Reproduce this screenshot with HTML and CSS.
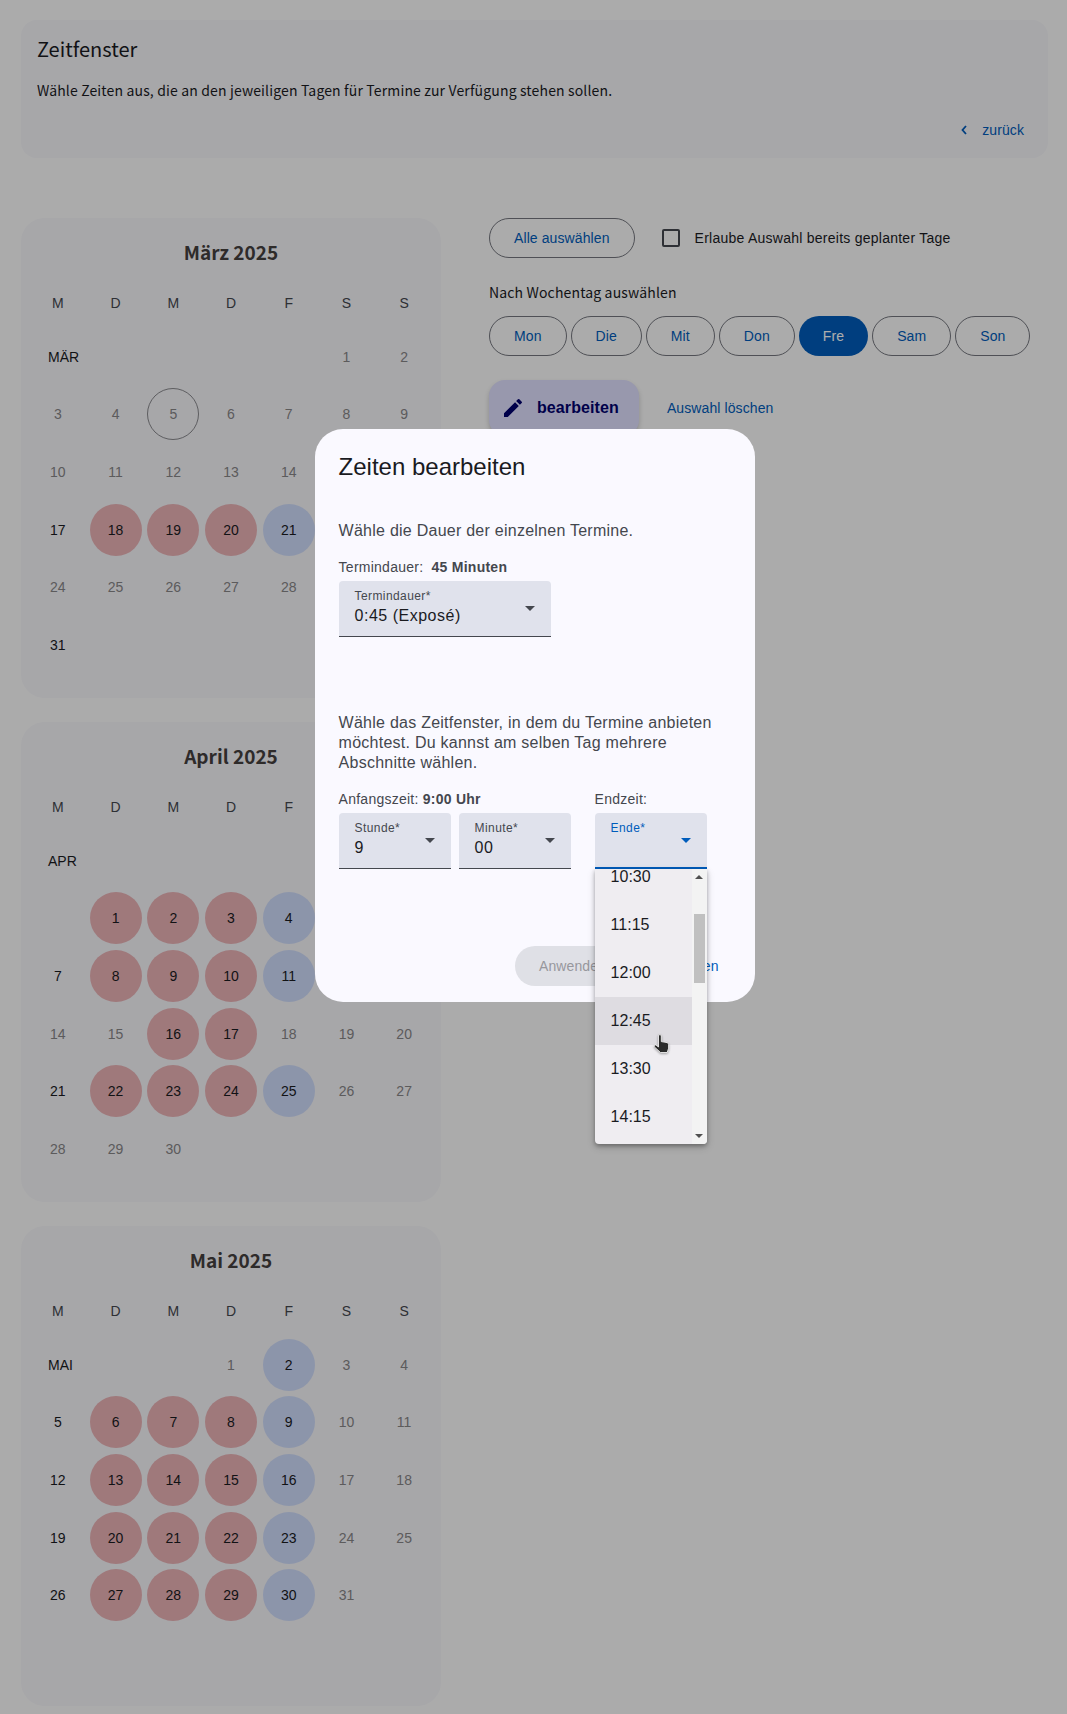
FILE: index.html
```html
<!DOCTYPE html>
<html lang="de">
<head>
    <meta charset="UTF-8">
    <meta name="viewport" content="width=device-width, initial-scale=1.0">
    <title>Zeitfenster</title>
    <link rel="stylesheet" href="styles.css">
</head>
<body>
    <!-- Page behind the dialog -->
    <header class="head-card">
        <h1>Zeitfenster</h1>
        <p>Wähle Zeiten aus, die an den jeweiligen Tagen für Termine zur Verfügung stehen sollen.</p>
        <div class="head-actions">
            <a class="back-link">
                <svg class="back-icon" viewBox="0 0 8 12" width="8" height="12"><path d="M6 2 2.5 6 6 10" fill="none" stroke="#005cbb" stroke-width="1.8"/></svg>
                zurück
            </a>
        </div>
    </header>

    <main class="layout">
        <div class="calendars">
            <!-- March -->
            <section class="month">
                <h2>März 2025</h2>
                <div class="weekdays"><span>M</span><span>D</span><span>M</span><span>D</span><span>F</span><span>S</span><span>S</span></div>
                <div class="days">
                    <span class="month-label span-5">MÄR</span>
                    <span class="day off">1</span><span class="day off">2</span>
                    <span class="day off">3</span><span class="day off">4</span><span class="day off"><b class="today">5</b></span><span class="day off">6</span><span class="day off">7</span><span class="day off">8</span><span class="day off">9</span>
                    <span class="day off">10</span><span class="day off">11</span><span class="day off">12</span><span class="day off">13</span><span class="day off">14</span><span class="day off">15</span><span class="day off">16</span>
                    <span class="day">17</span><span class="day"><b class="red">18</b></span><span class="day"><b class="red">19</b></span><span class="day"><b class="red">20</b></span><span class="day"><b class="blue">21</b></span><span class="day off">22</span><span class="day off">23</span>
                    <span class="day off">24</span><span class="day off">25</span><span class="day off">26</span><span class="day off">27</span><span class="day off">28</span><span class="day off">29</span><span class="day off">30</span>
                    <span class="day">31</span>
                </div>
            </section>

            <!-- April -->
            <section class="month">
                <h2>April 2025</h2>
                <div class="weekdays"><span>M</span><span>D</span><span>M</span><span>D</span><span>F</span><span>S</span><span>S</span></div>
                <div class="days">
                    <span class="month-label span-7">APR</span>
                    <span class="day"></span><span class="day"><b class="red">1</b></span><span class="day"><b class="red">2</b></span><span class="day"><b class="red">3</b></span><span class="day"><b class="blue">4</b></span><span class="day off">5</span><span class="day off">6</span>
                    <span class="day">7</span><span class="day"><b class="red">8</b></span><span class="day"><b class="red">9</b></span><span class="day"><b class="red">10</b></span><span class="day"><b class="blue">11</b></span><span class="day off">12</span><span class="day off">13</span>
                    <span class="day off">14</span><span class="day off">15</span><span class="day"><b class="red">16</b></span><span class="day"><b class="red">17</b></span><span class="day off">18</span><span class="day off">19</span><span class="day off">20</span>
                    <span class="day">21</span><span class="day"><b class="red">22</b></span><span class="day"><b class="red">23</b></span><span class="day"><b class="red">24</b></span><span class="day"><b class="blue">25</b></span><span class="day off">26</span><span class="day off">27</span>
                    <span class="day off">28</span><span class="day off">29</span><span class="day off">30</span>
                </div>
            </section>

            <!-- May -->
            <section class="month">
                <h2>Mai 2025</h2>
                <div class="weekdays"><span>M</span><span>D</span><span>M</span><span>D</span><span>F</span><span>S</span><span>S</span></div>
                <div class="days">
                    <span class="month-label span-3">MAI</span>
                    <span class="day off">1</span><span class="day"><b class="blue">2</b></span><span class="day off">3</span><span class="day off">4</span>
                    <span class="day">5</span><span class="day"><b class="red">6</b></span><span class="day"><b class="red">7</b></span><span class="day"><b class="red">8</b></span><span class="day"><b class="blue">9</b></span><span class="day off">10</span><span class="day off">11</span>
                    <span class="day">12</span><span class="day"><b class="red">13</b></span><span class="day"><b class="red">14</b></span><span class="day"><b class="red">15</b></span><span class="day"><b class="blue">16</b></span><span class="day off">17</span><span class="day off">18</span>
                    <span class="day">19</span><span class="day"><b class="red">20</b></span><span class="day"><b class="red">21</b></span><span class="day"><b class="red">22</b></span><span class="day"><b class="blue">23</b></span><span class="day off">24</span><span class="day off">25</span>
                    <span class="day">26</span><span class="day"><b class="red">27</b></span><span class="day"><b class="red">28</b></span><span class="day"><b class="red">29</b></span><span class="day"><b class="blue">30</b></span><span class="day off">31</span>
                </div>
            </section>
        </div>

        <div class="side">
            <div class="select-row">
                <button class="pill">Alle auswählen</button>
                <label class="check"><span class="check-box"></span>Erlaube Auswahl bereits geplanter Tage</label>
            </div>
            <div class="side-label">Nach Wochentag auswählen</div>
            <div class="weekday-pills">
                <button class="pill">Mon</button>
                <button class="pill">Die</button>
                <button class="pill">Mit</button>
                <button class="pill">Don</button>
                <button class="pill active">Fre</button>
                <button class="pill">Sam</button>
                <button class="pill">Son</button>
            </div>
            <div class="edit-row">
                <button class="edit-fab">
                    <svg viewBox="0 0 24 24" width="24" height="24"><path fill="#00006e" d="M3 17.25V21h3.75L17.81 9.94l-3.75-3.75L3 17.25zM20.71 7.04a1 1 0 0 0 0-1.41l-2.34-2.34a1 1 0 0 0-1.41 0l-1.83 1.83 3.75 3.75 1.83-1.83z"/></svg>
                    bearbeiten
                </button>
                <a class="link">Auswahl löschen</a>
            </div>
        </div>
    </main>

    <div class="backdrop"></div>

    <!-- Dialog -->
    <div class="dialog">
        <h2 class="dialog-title">Zeiten bearbeiten</h2>
        <p class="dialog-text first">Wähle die Dauer der einzelnen Termine.</p>
        <div class="field-label">Termindauer:&nbsp; <strong>45 Minuten</strong></div>
        <div class="select wide">
            <span class="select-label">Termindauer*</span>
            <span class="select-value">0:45 (Exposé)</span>
            <i class="arrow"></i>
        </div>

        <p class="dialog-text second">Wähle das Zeitfenster, in dem du Termine anbieten möchtest. Du kannst am selben Tag mehrere Abschnitte wählen.</p>
        <div class="time-row">
            <div class="time-start">
                <div class="field-label">Anfangszeit: <strong>9:00 Uhr</strong></div>
                <div class="select-pair">
                    <div class="select">
                        <span class="select-label">Stunde*</span>
                        <span class="select-value">9</span>
                        <i class="arrow"></i>
                    </div>
                    <div class="select">
                        <span class="select-label">Minute*</span>
                        <span class="select-value">00</span>
                        <i class="arrow"></i>
                    </div>
                </div>
            </div>
            <div class="time-end">
                <div class="field-label">Endzeit:</div>
                <div class="select focused">
                    <span class="select-label">Ende*</span>
                    <span class="select-value">&nbsp;</span>
                    <i class="arrow"></i>
                    <div class="panel">
                        <ul class="options">
                            <li>10:30</li>
                            <li>11:15</li>
                            <li>12:00</li>
                            <li class="hover">12:45</li>
                            <li>13:30</li>
                            <li>14:15</li>
                        </ul>
                        <div class="scrollbar">
                            <i class="scroll-up"></i>
                            <div class="scroll-thumb"></div>
                            <i class="scroll-down"></i>
                        </div>
                    </div>
                </div>
            </div>
        </div>
        <div class="dialog-actions">
            <button class="apply">Anwenden</button>
            <a class="link cancel">Abbrechen</a>
        </div>
    </div>

    <!-- Mouse pointer from the screenshot -->
    <svg class="hand" viewBox="0 0 18 20" width="18" height="20"><path d="M5.5 2a1.4 1.4 0 0 1 2.8 0v5.6l5.7 1a2 2 0 0 1 1.6 2v3.6L14.2 18.500H7.500L1.500 13a1.200 1.200 0 0 1 1.700-1.700L5.500 13z" fill="#2b2b2b" stroke="#fff" stroke-width=".8"/></svg>
</body>
</html>
```

FILE: styles.css
```css
/* Base */
html, body {
    margin: 0;
    padding: 0;
}

body {
    position: relative;
    width: 1067px;
    height: 1714px;
    overflow: hidden;
    background: #fcfcfc;
    color: #1a1b1f;
    font-family: "Liberation Sans", Arial, sans-serif;
    font-size: 14px;
}

h1, h2, p, ul {
    margin: 0;
    padding: 0;
}

button {
    font-family: inherit;
    font-size: 14px;
    letter-spacing: .1px;
    cursor: pointer;
}

.link, .back-link {
    color: #005cbb;
    letter-spacing: .1px;
}

/* Top card */
.head-card {
    margin: 20px 19px 0 21px;
    height: 138px;
    box-sizing: border-box;
    padding: 15px 24px 0 16px;
    background: #f6f6fa;
    border-radius: 16px;
    font-family: "Noto Sans CJK SC", sans-serif;
}

.head-card h1 {
    font-size: 20px;
    font-weight: 400;
    line-height: 28px;
}

.head-card p {
    margin-top: 17px;
    font-size: 14px;
    letter-spacing: .15px;
    line-height: 20px;
}

.head-actions {
    margin-top: 20px;
    display: flex;
    justify-content: flex-end;
    line-height: 20px;
    font-family: "Liberation Sans", Arial, sans-serif;
}

.back-link {
    display: flex;
    align-items: center;
    gap: 14px;
}

/* Layout under the card */
.layout {
    display: flex;
    gap: 48px;
    margin: 60px 0 0 21px;
}

.calendars {
    display: flex;
    flex-direction: column;
    gap: 24px;
    width: 420px;
}

.month {
    height: 480px;
    box-sizing: border-box;
    padding: 15px 8px 0;
    background: #f6f6fa;
    border-radius: 24px;
}

.month h2 {
    font-family: "Noto Sans CJK SC", sans-serif;
    font-size: 19px;
    font-weight: 700;
    line-height: 38px;
    text-align: center;
    color: #44403f;
}

.weekdays, .days {
    display: grid;
    grid-template-columns: repeat(7, 1fr);
}

.weekdays {
    margin-top: 18px;
    line-height: 28px;
    text-align: center;
    color: #44474e;
}

.days {
    margin-top: 11px;
    grid-auto-rows: 57.67px;
}

.month-label {
    padding-left: 19px;
    line-height: 59px;
}

.span-3 { grid-column: span 3; }
.span-5 { grid-column: span 5; }
.span-7 { grid-column: span 7; }

.day {
    display: flex;
    align-items: center;
    justify-content: center;
}

.day.off {
    color: #888688;
}

.day b {
    display: flex;
    align-items: center;
    justify-content: center;
    box-sizing: border-box;
    width: 52px;
    height: 52px;
    border-radius: 50%;
    font-weight: 400;
}

.day b.red { background: #ebb3b6; }
.day b.blue { background: #cfdcfb; }
.day b.today { border: 1px solid #8a8a8e; }

/* Right column */
.side {
    width: 545px;
}

.select-row {
    display: flex;
    align-items: center;
    gap: 27px;
}

.pill {
    height: 40px;
    padding: 0 24px;
    background: transparent;
    border: 1px solid #75777f;
    border-radius: 20px;
    color: #005cbb;
}

.pill.active {
    background: #005cbb;
    border: none;
    color: #fff;
}

.check {
    display: flex;
    align-items: center;
    gap: 15px;
    letter-spacing: .25px;
}

.check-box {
    width: 14px;
    height: 14px;
    border: 2px solid #44474e;
    border-radius: 2px;
}

.side-label {
    margin-top: 24px;
    line-height: 20px;
    font-family: "Noto Sans CJK SC", sans-serif;
    font-size: 14px;
    letter-spacing: .15px;
}

.weekday-pills {
    display: flex;
    gap: 4px;
    margin-top: 14px;
}

.edit-row {
    display: flex;
    align-items: center;
    gap: 28px;
    margin-top: 24px;
}

.edit-fab {
    display: flex;
    align-items: center;
    gap: 12px;
    height: 56px;
    padding: 0 20px 0 12px;
    background: #e0e0ff;
    border: none;
    border-radius: 16px;
    box-shadow: 0 3px 5px rgba(0, 0, 0, .2);
    color: #00006e;
    font-size: 16px;
    font-weight: 700;
}

/* Dialog */
.backdrop {
    position: absolute;
    top: 0;
    right: 0;
    bottom: 0;
    left: 0;
    background: rgba(0, 0, 0, .32);
}

.dialog {
    position: absolute;
    top: 429px;
    left: 314.6px;
    width: 440px;
    height: 573px;
    box-sizing: border-box;
    padding: 22px 24px 0;
    background: #faf9ff;
    border-radius: 28px;
    color: #44474e;
}

.dialog-title {
    font-size: 24px;
    font-weight: 400;
    line-height: 32px;
    color: #1a1b1f;
}

.dialog-text {
    font-size: 16px;
    line-height: 20px;
    letter-spacing: .25px;
}

.dialog-text.first { margin-top: 38px; }
.dialog-text.second { margin-top: 76px; }

.field-label {
    line-height: 20px;
    letter-spacing: .25px;
}

.dialog-text.first + .field-label {
    margin-top: 16px;
}

.select {
    position: relative;
    height: 56px;
    box-sizing: border-box;
    padding: 7px 16px 0;
    margin-top: 4px;
    background: #e0e2ec;
    border-bottom: 1px solid #44474e;
    border-radius: 4px 4px 0 0;
}

.select.wide {
    width: 212px;
}

.select-label {
    display: block;
    font-size: 12px;
    line-height: 16px;
    letter-spacing: .4px;
}

.select-value {
    display: block;
    font-size: 16px;
    line-height: 24px;
    letter-spacing: .5px;
    color: #1a1b1f;
}

.arrow {
    position: absolute;
    top: 25px;
    right: 16px;
    width: 0;
    height: 0;
    border-left: 5px solid transparent;
    border-right: 5px solid transparent;
    border-top: 5px solid #44474e;
}

.time-row {
    display: flex;
    gap: 24px;
    margin-top: 16px;
}

.time-start {
    width: 232px;
}

.select-pair {
    display: grid;
    grid-template-columns: 1fr 1fr;
    gap: 8px;
}

.time-end {
    width: 112px;
}

.select.focused {
    border-bottom: 2px solid #005cbb;
}

.select.focused .select-label {
    color: #005cbb;
}

.select.focused .arrow {
    border-top-color: #005cbb;
}

/* Dropdown list */
.panel {
    position: absolute;
    z-index: 2;
    top: 56px;
    left: 0;
    display: flex;
    width: 112px;
    height: 275px;
    overflow: hidden;
    background: #efedf1;
    border-radius: 0 0 4px 4px;
    box-shadow: 0 2px 4px rgba(0, 0, 0, .3), 0 3px 8px rgba(0, 0, 0, .15);
}

.options {
    flex: 1;
    margin-top: -16px;
    list-style: none;
}

.options li {
    height: 48px;
    padding-left: 16px;
    font-size: 16px;
    line-height: 48px;
    color: #1a1b1f;
}

.options li.hover {
    background: #dedce1;
}

.scrollbar {
    position: relative;
    width: 15px;
    background: #f3f3f3;
}

.scroll-thumb {
    position: absolute;
    top: 45px;
    left: 2px;
    width: 11px;
    height: 69px;
    background: #c0c0c0;
}

.scroll-up, .scroll-down {
    position: absolute;
    left: 3px;
    width: 0;
    height: 0;
    border-left: 4px solid transparent;
    border-right: 4px solid transparent;
}

.scroll-up {
    top: 6px;
    border-bottom: 4px solid #505050;
}

.scroll-down {
    bottom: 6px;
    border-top: 4px solid #505050;
}

.dialog-actions {
    display: flex;
    justify-content: flex-end;
    align-items: center;
    gap: 20px;
    margin-top: 77px;
    padding-right: 12px;
}

.apply {
    height: 40px;
    padding: 0 24px;
    background: #dfe0e6;
    border: none;
    border-radius: 20px;
    color: #97979d;
}

.hand {
    position: absolute;
    z-index: 3;
    top: 1034px;
    left: 653px;
    filter: drop-shadow(0 1px 1px rgba(0, 0, 0, .35));
}
```
